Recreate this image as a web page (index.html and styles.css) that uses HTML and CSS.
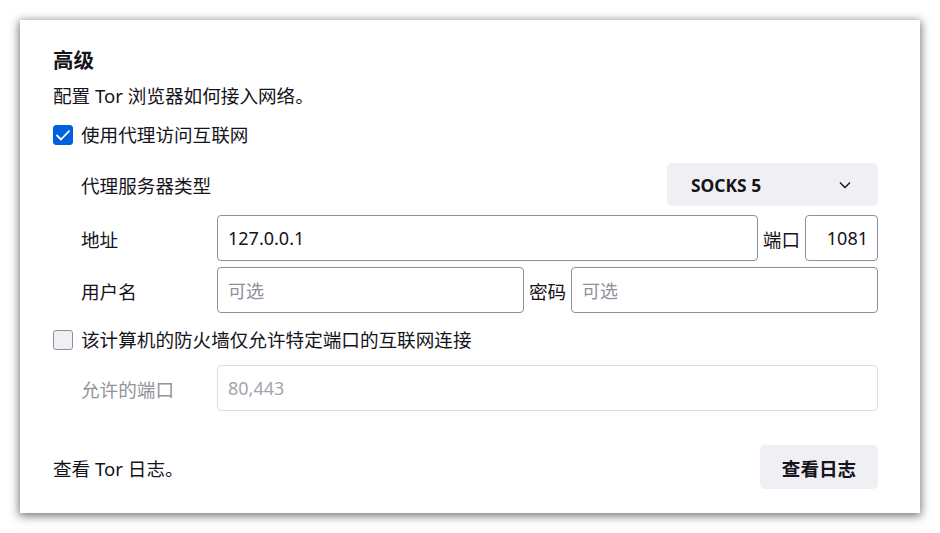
FILE: index.html
```html
<!DOCTYPE html>
<html lang="zh-CN">
<head>
<meta charset="utf-8">
<title>高级</title>
<link rel="stylesheet" href="styles.css">
</head>
<body>
<div class="dialog">
  <h2 class="title">高级</h2>
  <p class="desc">配置 Tor 浏览器如何接入网络。</p>
  <label class="check-row">
    <span class="box checked">
      <svg width="14" height="11" viewBox="0 0 14 11"><path d="M1 5.5 L5 9.5 L13 1.2" fill="none" stroke="#fff" stroke-width="1.8" stroke-linecap="round" stroke-linejoin="round"/></svg>
    </span>
    <span>使用代理访问互联网</span>
  </label>
  <div class="proxy">
    <div class="row row-type">
      <span class="lbl">代理服务器类型</span>
      <div class="select">
        <span>SOCKS 5</span>
        <svg class="chev" width="12" height="8" viewBox="0 0 12 8"><path d="M1 1.5 L6 6.5 L11 1.5" fill="none" stroke="#15141a" stroke-width="1.4"/></svg>
      </div>
    </div>
    <div class="row row-addr">
      <span class="lbl">地址</span>
      <div class="input grow">127.0.0.1</div>
      <span class="mid">端口</span>
      <div class="input port">1081</div>
    </div>
    <div class="row row-user">
      <span class="lbl">用户名</span>
      <div class="input grow ph">可选</div>
      <span class="mid">密码</span>
      <div class="input grow ph">可选</div>
    </div>
  </div>
  <label class="check-row fw">
    <span class="box"></span>
    <span>该计算机的防火墙仅允许特定端口的互联网连接</span>
  </label>
  <div class="row ports">
    <span class="lbl dis">允许的端口</span>
    <div class="input grow disabled">80,443</div>
  </div>
  <div class="bottom">
    <span>查看 Tor 日志。</span>
    <div class="btn">查看日志</div>
  </div>
</div>
</body>
</html>
```
FILE: styles.css
```css
* { box-sizing: border-box; }
html, body { margin: 0; padding: 0; background: #fff; }
body {
  font-family: "Noto Sans", "Noto Sans CJK SC", sans-serif;
  color: #15141a;
  font-size: 18.6px;
  padding: 20px 20px 20px 20px;
  min-height: 533px;
}
.dialog {
  width: 900px;
  height: 493px;
  background: #fff;
  box-shadow: 0 2px 9px 1px rgba(0,0,0,0.55);
  padding: 26px 42px 0 33px;
  display: flex;
  flex-direction: column;
}
.title {
  margin: 0;
  font-size: 20.5px;
  font-weight: 700;
  line-height: 28px;
}
.desc {
  margin: 9px 0 0;
  line-height: 26px;
}
.check-row {
  margin-top: 13px;
  display: flex;
  align-items: center;
  height: 26px;
  line-height: 26px;
}
.check-row.fw { margin-top: 14px; }
.box {
  width: 20px;
  height: 20px;
  border-radius: 3px;
  border: 1px solid #8f8f9d;
  background: #f0f0f4;
  margin-right: 8px;
  display: flex;
  align-items: center;
  justify-content: center;
  flex: none;
}
.box.checked {
  background: #0061e0;
  border-color: #0061e0;
}
.proxy {
  margin-top: 15px;
  display: flex;
  flex-direction: column;
}
.row {
  display: flex;
  align-items: center;
  padding-left: 28px;
}
.row-type { height: 43px; justify-content: space-between; }
.row-addr { margin-top: 9px; height: 46px; }
.row-user { margin-top: 6px; height: 46px; }
.ports { margin-top: 12px; height: 46px; }
.lbl { width: 136px; flex: none; }
.lbl.dis { color: #939399; }
.select {
  width: 211px;
  height: 43px;
  background: #f0f0f4;
  border-radius: 5px;
  display: flex;
  align-items: center;
  justify-content: space-between;
  padding: 0 27px 0 24px;
  font-weight: 700;
  font-size: 17.4px;
}
.input {
  height: 46px;
  border: 1px solid #8f8f9d;
  border-radius: 4px;
  display: flex;
  align-items: center;
  padding-left: 10px;
  font-size: 18px;
}
.grow { flex: 1; min-width: 0; }
.port { width: 73px; flex: none; justify-content: flex-end; padding: 0 9px 0 0; }
.ph { color: #8f8f9d; }
.disabled { border-color: #dcdce2; color: #a4a4ab; }
.mid { margin: 0 5px; flex: none; }
.bottom {
  margin-top: 34px;
  display: flex;
  justify-content: space-between;
  align-items: center;
}
.btn {
  width: 118px;
  height: 44px;
  border-radius: 5px;
  background: #f0f0f4;
  font-weight: 700;
  display: flex;
  align-items: center;
  justify-content: center;
}
```
